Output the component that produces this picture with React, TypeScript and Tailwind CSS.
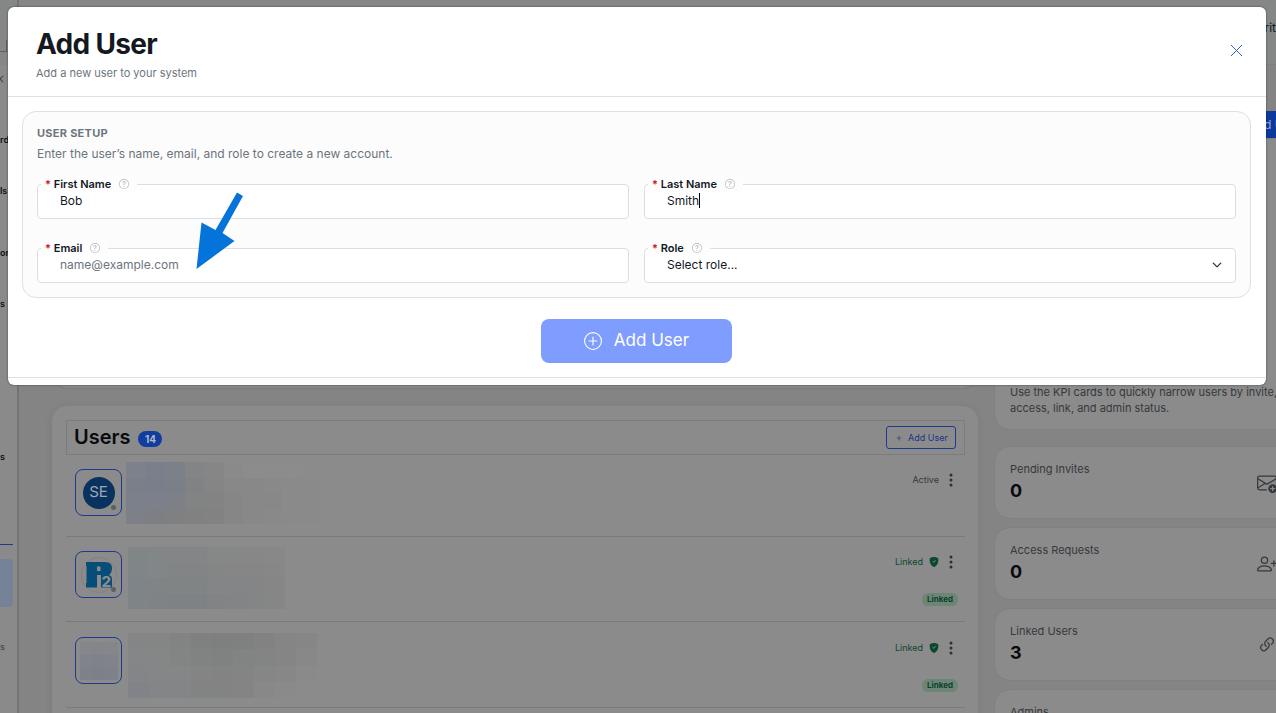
import { ReactNode } from "react";
import {
  BsEnvelopePlus,
  BsLink45Deg,
  BsPersonPlus,
  BsPlus,
  BsPlusCircle,
  BsQuestionCircle,
  BsShieldFillCheck,
  BsThreeDotsVertical,
  BsChevronDown,
  BsX,
} from "react-icons/bs";

interface FieldProps {
  id: string;
  label: string;
  children: ReactNode;
}

interface MosaicProps {
  width: number;
  height: number;
  cols: number;
  colors: string[];
}

const inputClass =
  "block w-full h-[35px] appearance-none rounded border border-[#dcdee0] bg-white pl-[22px] pr-8 pb-0.5 text-xs leading-4 text-[#14181f] outline-none placeholder:text-[#6c757d]";

const mosaics = {
  first: {
    width: 195,
    height: 62,
    cols: 10,
    colors: [
      "#7c818b", "#797f8b", "#7c8089", "#838485", "#868686", "#8a8a8b", "#8c8c8c", "#8c8c8c", "#8c8c8c", "#8b8b8b",
      "#7a7f89", "#787e8a", "#7b7f88", "#818284", "#858585", "#888888", "#888888", "#898989", "#8a8a8a", "#8a8a8a",
      "#7b808b", "#7b808b", "#7d8086", "#828383", "#838383", "#868686", "#888888", "#888888", "#8a8a8a", "#8a8a8a",
      "#7d8087", "#7d7f83", "#7f8081", "#818181", "#828282", "#868686", "#888888", "#898989", "#8a8a8a", "#8a8a8a",
    ],
  },
  second: {
    width: 157,
    height: 62,
    cols: 8,
    colors: [
      "#808588", "#828688", "#838586", "#838586", "#868787", "#868787", "#878788", "#888888",
      "#808588", "#828688", "#828586", "#828485", "#848686", "#868687", "#868687", "#878787",
      "#7e8488", "#808487", "#818485", "#818485", "#838586", "#848586", "#848586", "#868687",
      "#7f8486", "#7f8385", "#7f8284", "#7f8284", "#818385", "#828485", "#848586", "#868686",
    ],
  },
  third: {
    width: 189,
    height: 65,
    cols: 9,
    colors: [
      "#848587", "#848585", "#828484", "#7f8080", "#7e7f7f", "#7f8080", "#828282", "#858585", "#868686",
      "#848688", "#858686", "#838484", "#818282", "#808181", "#828383", "#838484", "#858585", "#888888",
      "#838589", "#848688", "#858687", "#848484", "#838383", "#848484", "#868686", "#878787", "#8a8a8a",
      "#818388", "#838587", "#848586", "#828383", "#828383", "#848484", "#888888", "#8a8a8a", "#8b8b8b",
    ],
  },
  avatar: {
    width: 38,
    height: 38,
    cols: 3,
    colors: [
      "#84868b", "#83858b", "#84868b",
      "#808389", "#7f8288", "#808389",
      "#7e8188", "#7c8089", "#7e8188",
    ],
  },
};

const users = [
  { id: "se", status: "Active", linked: false, mosaic: mosaics.first },
  { id: "r12", status: "Linked", linked: true, mosaic: mosaics.second },
  { id: "hidden", status: "Linked", linked: true, mosaic: mosaics.third },
];

const stats = [
  { label: "Pending Invites", value: "0", icon: BsEnvelopePlus },
  { label: "Access Requests", value: "0", icon: BsPersonPlus },
  { label: "Linked Users", value: "3", icon: BsLink45Deg },
  { label: "Admins", value: "", icon: null },
];

function Mosaic({ width, height, cols, colors }: MosaicProps) {
  const rows = colors.length / cols;
  return (
    <svg
      width={width}
      height={height}
      viewBox={`0 0 ${cols} ${rows}`}
      preserveAspectRatio="none"
      shapeRendering="crispEdges"
      aria-hidden="true"
    >
      {colors.map((color, i) => (
        <rect
          key={i}
          x={i % cols}
          y={Math.floor(i / cols)}
          width="1"
          height="1"
          fill={color}
        />
      ))}
    </svg>
  );
}

function Avatar({ id }: { id: string }) {
  return (
    <div className="relative w-[47px] h-[47px] shrink-0 flex items-center justify-center rounded-lg border border-[#1d3a8c]">
      {id === "se" && (
        <div className="w-8 h-8 rounded-full bg-[#09335e] flex items-center justify-center text-[15px] text-[#9ba8b5]">
          SE
        </div>
      )}
      {id === "r12" && (
        <svg width="36" height="36" viewBox="0 0 36 36" aria-hidden="true">
          <circle cx="18" cy="18" r="17.5" fill="#8b8b8b" stroke="#7b7b7b" strokeWidth="0.6" />
          <path
            d="M5 5H24Q31 5 31 11Q31 16 28 18Q31 19 31 22V30.500H5V26H5.500V9H5Z"
            fill="#064d78"
          />
          <path d="M16 9.500h3.500v4.500h-3.500z" fill="#8b8b8b" />
          <path d="M16 18h4v13h-4z" fill="#8b8b8b" />
          <text x="20.500" y="30" fontSize="15" fontWeight="800" fill="#8b8b8b">
            2
          </text>
        </svg>
      )}
      {id === "hidden" && <Mosaic {...mosaics.avatar} />}
      {id !== "hidden" && (
        <span className="absolute right-[5px] bottom-[5px] w-[5px] h-[5px] rounded-full bg-[#5d6063]" />
      )}
    </div>
  );
}

function Field({ id, label, children }: FieldProps) {
  return (
    <div className="relative">
      {children}
      <div className="absolute left-1 -top-2 h-4 pl-1 pr-2 flex items-center rounded bg-[#fdfdfd]">
        <label htmlFor={id} className="text-[11px] leading-4 font-semibold text-[#14181f]">
          <span className="text-[#c8102e]">*</span> {label}
        </label>
        <BsQuestionCircle className="ml-2 w-2.5 h-2.5 text-[#b3b7bb]" />
      </div>
    </div>
  );
}

function UserRow({ user }: { user: (typeof users)[number] }) {
  return (
    <li className="h-[85px] first:h-[82px] last:h-[86px] flex items-start border-b border-[#787a7b] pl-[9px] pr-1.5 pt-[14px] last:pt-[15px]">
      <Avatar id={user.id} />
      <div className={user.linked ? "-mt-1 ml-1.5" : "-mt-[7px] ml-1"}>
        <Mosaic {...user.mosaic} />
      </div>
      <div className="ml-auto flex flex-col items-end">
        <div className="flex items-center h-[22px]">
          <span className={user.linked ? "text-[9px] text-[#0c482d]" : "text-[9px] text-[#34373a]"}>
            {user.status}
          </span>
          {user.linked && <BsShieldFillCheck className="ml-1.5 w-2.5 h-2.5 text-[#0c482d]" />}
          <button type="button" aria-label="More actions" className="ml-1 text-[#2c2f33]">
            <BsThreeDotsVertical className="w-4 h-4" />
          </button>
        </div>
        {user.linked && (
          <span className="mt-5 mr-px h-[13px] px-[5px] rounded-md bg-[#6c8577] text-[8px] leading-[13px] font-bold text-[#0c4229]">
            Linked
          </span>
        )}
      </div>
    </li>
  );
}

function Sidebar() {
  return (
    <aside className="w-[19px] shrink-0 border-r-2 border-[#747474] bg-[#8a8a8a] text-[9px] leading-4 font-semibold text-[#0c0e12]">
      <div className="h-[65px] bg-[#858786] pt-10">
        <div className="w-[7px] h-3 border-r border-b border-[#5b5e62]" />
      </div>
      <div className="h-[67px] pt-1.5 overflow-hidden">
        <BsX className="-ml-2 w-4 h-4 text-[#3c3f43]" />
      </div>
      <div className="h-[51px]">rd</div>
      <div className="h-[62px]">ls</div>
      <div className="h-[51px]">on</div>
      <div className="h-[153px]">s</div>
      <div className="h-[95px]">s</div>
      <div className="w-[13px] border-t border-[#1d3a8c]" />
      <div className="mt-3.5 h-12 w-[13px] rounded-r bg-[#768296]" />
      <div className="mt-8 text-[#4b4e52]">s</div>
    </aside>
  );
}

function AddUserDialog() {
  return (
    <div
      role="dialog"
      aria-labelledby="dialog-title"
      className="absolute top-[7px] left-2 right-2.5 rounded-md bg-white pb-[7px] shadow-[0_0_2px_rgba(0,0,0,0.6)]"
    >
      <header className="h-[90px] flex items-start justify-between border-b border-[#dee2e6] pl-7 pr-[22px] pt-5">
        <div>
          <h1 id="dialog-title" className="text-[28px] leading-[34px] font-bold tracking-tight text-[#14181f]">
            Add User
          </h1>
          <p className="mt-1 text-[11px] leading-4 text-[#6c757d]">Add a new user to your system</p>
        </div>
        <button type="button" aria-label="Close" className="mt-4 text-[#2f5fd0]">
          <svg width="15" height="15" viewBox="0 0 15 15" aria-hidden="true">
            <path d="M2 2L13 13M13 2L2 13" stroke="currentColor" fill="none" />
          </svg>
        </button>
      </header>

      <form className="border-b border-[#dee2e6] pt-3.5 pl-3.5 pr-[15px] pb-3.5">
        <section className="rounded-[14px] border border-[#dee0e2] bg-[#fcfcfc] p-3.5 pt-[13px]">
          <h2 className="text-[11px] leading-4 font-bold tracking-wide text-[#6c757d]">USER SETUP</h2>
          <p className="mt-[3px] text-xs leading-5 text-[#6c757d]">
            Enter the user’s name, email, and role to create a new account.
          </p>
          <div className="mt-5 grid grid-cols-2 gap-x-[15px] gap-y-[29px]">
            <Field id="first-name" label="First Name">
              <input id="first-name" type="text" defaultValue="Bob" className={inputClass} />
            </Field>
            <Field id="last-name" label="Last Name">
              <input id="last-name" type="text" defaultValue="Smith" className={inputClass} />
              <span className="absolute left-[55px] top-[9px] w-px h-[15px] bg-black" />
            </Field>
            <Field id="email" label="Email">
              <input id="email" type="email" placeholder="name@example.com" className={inputClass} />
            </Field>
            <Field id="role" label="Role">
              <select id="role" className={inputClass}>
                <option>Select role...</option>
              </select>
              <BsChevronDown className="absolute right-3.5 top-3 w-2.5 h-2.5 text-[#14181f] stroke-1" />
            </Field>
          </div>
        </section>
        <button
          type="button"
          className="mt-[21px] mx-auto w-[191px] h-11 flex items-center justify-center gap-3 rounded-lg bg-[#7f9cff] text-[17px] text-white"
        >
          <BsPlusCircle className="w-[18px] h-[18px]" />
          Add User
        </button>
      </form>

      <svg
        className="absolute left-[187px] top-[184px]"
        width="50"
        height="80"
        viewBox="0 0 50 80"
        aria-hidden="true"
      >
        <path d="M42 1.500L48 5L27.500 42L39.500 50L1.500 78L6.500 31.500L20.500 39Z" fill="#0574da" />
      </svg>
    </div>
  );
}

export default function App() {
  return (
    <div className="relative h-screen overflow-hidden flex bg-[#848484] font-['Inter',sans-serif]">
      <Sidebar />
      <div className="flex-1 min-w-0 flex flex-col">
        <div className="h-[65px] shrink-0 flex justify-end bg-[#858786] border-b border-[#7c8080] pt-5 text-xs text-[#14181f]">
          rit
        </div>
        <div className="h-[46px] shrink-0" />
        <div className="h-[27px] shrink-0 flex justify-end">
          <button type="button" className="h-[27px] w-3 overflow-hidden whitespace-nowrap bg-[#0b3a9c] text-xs text-[#9da9c4]">
            d U
          </button>
        </div>
        <div className="flex items-start pl-8 -mr-8">
          <main className="flex-1 min-w-0">
            <div className="h-[251px] rounded-b-2xl border border-t-0 border-[#797b80] bg-[#8a8a8a]" />
            <section className="mt-4 h-[330px] rounded-2xl border border-[#808080] bg-[#8b8b8b] p-3.5 pr-[13px] shadow-[0_2px_8px_rgba(0,0,0,0.05)]">
              <div className="h-[35px] flex items-center border border-[#7a7c7d] pl-[7px] pr-2">
                <h2 className="pb-0.5 text-xl font-semibold text-[#080a0e]">Users</h2>
                <span className="ml-2 mt-0.5 h-4 w-6 rounded-full bg-[#113d9e] text-center text-[10px] leading-4 font-bold text-[#b0b8ca]">
                  14
                </span>
                <button
                  type="button"
                  className="ml-auto h-[23px] w-[70px] flex items-center justify-center gap-1 rounded-[3px] border border-[#1d3a8c] text-[9px] text-[#18348a]"
                >
                  <BsPlus className="w-2.5 h-2.5" />
                  Add User
                </button>
              </div>
              <ul>
                {users.map((user) => (
                  <UserRow key={user.id} user={user} />
                ))}
              </ul>
            </section>
          </main>

          <div className="ml-[15px] w-[314px] shrink-0">
            <section className="h-[292px] flex items-end rounded-2xl border border-[#808080] bg-[#8b8b8b] px-[15px] pb-[13px] text-[11px] leading-4 text-[#36393d]">
              <p>
                Use the KPI cards to quickly narrow users by invite,
                <br />
                access, link, and admin status.
              </p>
            </section>
            <div className="mt-4 flex flex-col gap-2">
              {stats.map(({ label, value, icon: Icon }) => (
                <section
                  key={label}
                  className="h-[73px] flex items-center justify-between rounded-2xl border border-[#808080] bg-[#8b8b8b] pl-[15px] pr-[30px]"
                >
                  <div className="h-11">
                    <h3 className="text-[11px] leading-4 text-[#36393d]">{label}</h3>
                    <p className="mt-0.5 text-lg leading-6 font-bold text-[#080a0e]">{value}</p>
                  </div>
                  {Icon && <Icon className="w-5 h-5 text-[#36393d]" />}
                </section>
              ))}
            </div>
          </div>
        </div>
      </div>
      <AddUserDialog />
    </div>
  );
}
